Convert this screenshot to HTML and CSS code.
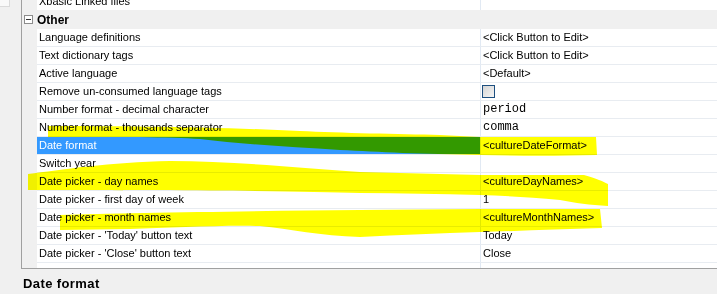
FILE: index.html
```html
<!DOCTYPE html>
<html lang="en">
<head>
    <meta charset="UTF-8">
    <title>Properties</title>
    <link rel="stylesheet" href="styles.css">
</head>
<body>
    <div class="window">
        <div class="side"><div class="side-tab"></div></div>

        <div class="grid">
            <div class="row row-cut">
                <span class="indent"></span>
                <span class="name">Xbasic Linked files</span>
                <span class="value"></span>
            </div>

            <div class="category">
                <span class="toggle"></span>
                <span class="cat-label">Other</span>
            </div>

            <div class="row">
                <span class="indent"></span>
                <span class="name">Language definitions</span>
                <span class="value">&lt;Click Button to Edit&gt;</span>
            </div>
            <div class="row">
                <span class="indent"></span>
                <span class="name">Text dictionary tags</span>
                <span class="value">&lt;Click Button to Edit&gt;</span>
            </div>
            <div class="row">
                <span class="indent"></span>
                <span class="name">Active language</span>
                <span class="value">&lt;Default&gt;</span>
            </div>
            <div class="row">
                <span class="indent"></span>
                <span class="name">Remove un-consumed language tags</span>
                <span class="value"><span class="check"></span></span>
            </div>
            <div class="row">
                <span class="indent"></span>
                <span class="name">Number format - decimal character</span>
                <span class="value mono">period</span>
            </div>
            <div class="row">
                <span class="indent"></span>
                <span class="name">Number format - thousands separator</span>
                <span class="value mono">comma</span>
            </div>
            <div class="row selected">
                <span class="indent"></span>
                <span class="name">Date format</span>
                <span class="value">&lt;cultureDateFormat&gt;</span>
            </div>
            <div class="row">
                <span class="indent"></span>
                <span class="name">Switch year</span>
                <span class="value"></span>
            </div>
            <div class="row">
                <span class="indent"></span>
                <span class="name">Date picker - day names</span>
                <span class="value">&lt;cultureDayNames&gt;</span>
            </div>
            <div class="row">
                <span class="indent"></span>
                <span class="name">Date picker - first day of week</span>
                <span class="value">1</span>
            </div>
            <div class="row">
                <span class="indent"></span>
                <span class="name">Date picker - month names</span>
                <span class="value">&lt;cultureMonthNames&gt;</span>
            </div>
            <div class="row">
                <span class="indent"></span>
                <span class="name">Date picker - 'Today' button text</span>
                <span class="value">Today</span>
            </div>
            <div class="row">
                <span class="indent"></span>
                <span class="name">Date picker - 'Close' button text</span>
                <span class="value">Close</span>
            </div>
            <div class="row row-filler">
                <span class="indent"></span>
                <span class="name"></span>
                <span class="value"></span>
            </div>
        </div>
    </div>

    <div class="desc">Date format</div>

    <!-- highlighter strokes drawn over the grid -->
    <svg class="marker" width="717" height="294" viewBox="0 0 717 294">
        <path d="M48,126 C120,126 220,127 300,131 C340,133 400,134 440,135 L480,137 L596,137 L597,155 C560,156 520,156 480,155 C420,154 380,152 340,150 C290,147 240,144 200,139 C170,137 120,137 48,137 Z"/>
        <path d="M28,174 C60,170 110,162 170,161 C230,161 290,167 360,172 L480,175 L584,175 C596,178 604,182 608,184 L608,206 C590,205 575,203 560,200 C530,197 505,196 480,195 C440,194 400,193 360,193 C300,191 200,190 28,190 Z"/>
        <path d="M60,215 C120,213 250,211 360,210 L480,209 L600,209 L602,228 C560,229 520,231 480,232 C440,233 400,235 360,237 C320,236 290,229 260,226 C220,225 170,228 130,229 L60,230 Z"/>
    </svg>
</body>
</html>
```

FILE: styles.css
```css
body {
    margin: 0;
    width: 717px;
    height: 294px;
    overflow: hidden;
    position: relative;
    background-color: #f0f0f0;
    font-family: "Liberation Sans", Arial, sans-serif;
    font-size: 11px;
    color: #000000;
}

.window {
    display: flex;
    height: 269px;
    overflow: hidden;
}

.side {
    flex: none;
    width: 21px;
    border-right: 1px solid #a0a0a0;
}

.side-tab {
    width: 9px;
    height: 6px;
    background-color: #f9f9f9;
    border-right: 1px solid #dadada;
    border-bottom: 1px solid #dadada;
}

.grid {
    flex: 1;
    display: flex;
    flex-direction: column;
    margin-top: -7px;
    background-color: #ffffff;
    border-bottom: 1px solid #a0a0a0;
}

.row {
    display: grid;
    grid-template-columns: 15px 443px 1fr;
}

.indent {
    background-color: #f0f0f0;
}

.name, .value {
    height: 17px;
    line-height: 17px;
    border-bottom: 1px solid #e8ecf1;
    white-space: nowrap;
    overflow: hidden;
}

.name {
    padding-left: 2px;
}

.value {
    display: flex;
    align-items: center;
    padding-left: 2px;
    border-left: 1px solid #e1e9f3;
}

.row-cut .name, .row-cut .value {
    border-bottom: none;
}

.row-filler .name, .row-filler .value {
    height: 5px;
    border-bottom: none;
}

.row.selected .name {
    background-color: #3399ff;
    color: #ffffff;
}

.mono {
    font-family: "Liberation Mono", "Courier New", monospace;
    font-size: 12px;
}

.check {
    width: 11px;
    height: 11px;
    margin-left: -1px;
    border: 1px solid #1d4f80;
    background: linear-gradient(135deg, #d4d4d4, #f5f5f5);
}

.category {
    display: flex;
    align-items: center;
    height: 19px;
    background-color: #f0f0f0;
}

.toggle {
    position: relative;
    width: 7px;
    height: 7px;
    margin-left: 2px;
    border: 1px solid #8c8c8c;
    background-color: #ffffff;
}

.toggle::after {
    content: "";
    position: absolute;
    left: 1px;
    top: 3px;
    width: 5px;
    height: 1px;
    background-color: #333333;
}

.cat-label {
    margin-left: 4px;
    font-size: 12px;
    font-weight: bold;
}

.desc {
    padding: 7px 0 0 23px;
    font-size: 13px;
    font-weight: bold;
    letter-spacing: 0.4px;
}

.marker {
    position: absolute;
    top: 0;
    left: 0;
    pointer-events: none;
    mix-blend-mode: multiply;
    fill: #ffff00;
}
```
